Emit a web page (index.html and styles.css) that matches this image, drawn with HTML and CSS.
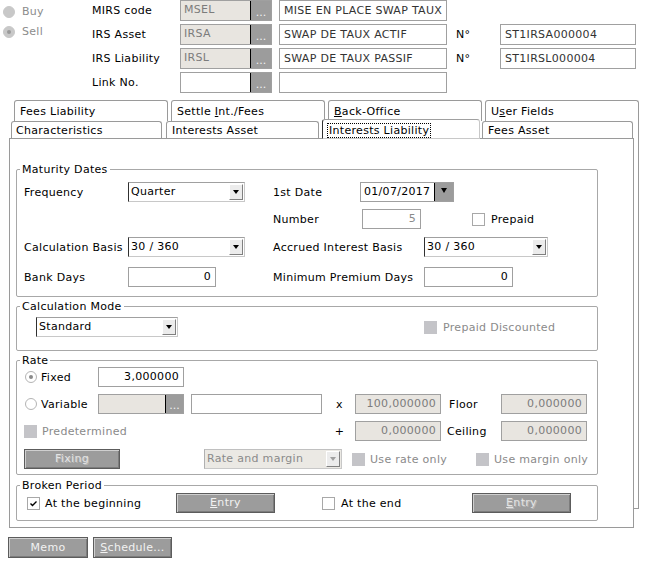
FILE: index.html
```html
<!DOCTYPE html>
<html lang="fr">
<head>
<meta charset="utf-8">
<title>IRS</title>
<link rel="stylesheet" href="styles.css">
</head>
<body>
<div class="top">
  <div class="side">
    <div class="rb"><span class="radio dis"></span><span class="dim">Buy</span></div>
    <div class="rb"><span class="radio dis on"></span><span class="dim">Sell</span></div>
  </div>
  <div class="topgrid">
    <span>MIRS code</span>
    <div class="pick"><span class="pv dis">MSEL</span><span class="dots">...</span></div>
    <div class="tf">MISE EN PLACE SWAP TAUX</div>
    <span></span><span></span>
    <span>IRS Asset</span>
    <div class="pick"><span class="pv dis">IRSA</span><span class="dots">...</span></div>
    <div class="tf">SWAP DE TAUX ACTIF</div>
    <span>N°</span>
    <div class="tf wide">ST1IRSA000004</div>
    <span>IRS Liability</span>
    <div class="pick"><span class="pv dis">IRSL</span><span class="dots">...</span></div>
    <div class="tf">SWAP DE TAUX PASSIF</div>
    <span>N°</span>
    <div class="tf wide">ST1IRSL000004</div>
    <span>Link No.</span>
    <div class="pick"><span class="pv"></span><span class="dots">...</span></div>
    <div class="tf"></div>
    <span></span><span></span>
  </div>
</div>

<div class="tabwrap">
  <div class="tabs back">
    <div class="tab">Fees Liability</div>
    <div class="tab">Settle <u>I</u>nt./Fees</div>
    <div class="tab"><u>B</u>ack-Office</div>
    <div class="tab">U<u>s</u>er Fields</div>
  </div>
  <div class="tabs front">
    <div class="tab">Characteristics</div>
    <div class="tab">Interests Asset</div>
    <div class="tab sel"><span class="focus">Interests Liability</span></div>
    <div class="tab">Fees Asset</div>
  </div>
  <div class="panel">
    <section class="grp gmat">
      <div class="gt">Maturity Dates</div>
      <div class="row r1">
        <span class="lab lw">Frequency</span>
        <div class="sel sw"><span class="sv">Quarter</span><span class="arr"></span></div>
        <span class="lab dl">1st Date</span>
        <div class="date"><span class="sv">01/07/2017</span><span class="darr"></span></div>
      </div>
      <div class="row r2">
        <span class="lab nl">Number</span>
        <div class="fld num nf gray">5</div>
        <span class="cb pp"></span><span class="cbl">Prepaid</span>
      </div>
      <div class="row r3">
        <span class="lab lw">Calculation Basis</span>
        <div class="sel sw"><span class="sv">30 / 360</span><span class="arr"></span></div>
        <span class="lab rl2">Accrued Interest Basis</span>
        <div class="sel aw"><span class="sv">30 / 360</span><span class="arr"></span></div>
      </div>
      <div class="row r4">
        <span class="lab lw">Bank Days</span>
        <div class="fld num bw">0</div>
        <span class="lab rl3">Minimum Premium Days</span>
        <div class="fld num mw">0</div>
      </div>
    </section>

    <section class="grp gcalc">
      <div class="gt">Calculation Mode</div>
      <div class="row rc">
        <div class="sel stw"><span class="sv">Standard</span><span class="arr"></span></div>
        <span class="cb dis pdc"></span><span class="cbl gray">Prepaid Discounted</span>
      </div>
    </section>

    <section class="grp grate">
      <div class="gt">Rate</div>
      <div class="rgrid">
        <div class="opt"><span class="radio on"></span>Fixed</div>
        <div class="fld num">3,000000</div>
        <span></span><span></span><span></span><span></span><span></span><span></span>

        <div class="opt"><span class="radio"></span>Variable</div>
        <div class="pick small"><span class="pv dis"></span><span class="dots">...</span></div>
        <span></span>
        <div class="fld"></div>
        <span class="op">x</span>
        <div class="fld num dis">100,000000</div>
        <span class="rlab">Floor</span>
        <div class="fld num dis">0,000000</div>

        <div class="opt span4 gray"><span class="cb dis"></span>Predetermined</div>
        <span class="op">+</span>
        <div class="fld num dis">0,000000</div>
        <span class="rlab ceil">Ceiling</span>
        <div class="fld num dis">0,000000</div>
      </div>
      <div class="row r5">
        <div class="btn off fix">Fixing</div>
        <div class="sel dsel"><span class="sv">Rate and margin</span><span class="arr"></span></div>
        <div class="chk uro"><span class="cb dis"></span><span class="gray">Use rate only</span></div>
        <div class="chk"><span class="cb dis"></span><span class="gray">Use margin only</span></div>
      </div>
    </section>

    <section class="grp gbp">
      <div class="gt">Broken Period</div>
      <div class="row rb1">
        <div class="chk bp1"><span class="cb on"><svg width="11" height="11" viewBox="0 0 11 11"><polyline points="2.5,5.5 4.5,7.5 8.5,3.5" fill="none" stroke="#000" stroke-width="1.4"/></svg></span><span>At the beginning</span></div>
        <div class="btn ent"><span><u>E</u>ntry</span></div>
        <div class="chk bp2"><span class="cb"></span><span>At the end</span></div>
        <div class="btn off ent"><span><u>E</u>ntry</span></div>
      </div>
    </section>
  </div>
</div>

<div class="foot">
  <div class="btn memo">Memo</div>
  <div class="btn sched"><span><u>S</u>chedule...</span></div>
</div>
</body>
</html>
```

FILE: styles.css
```css
* { box-sizing: border-box; }
body {
  margin: 0;
  width: 645px;
  height: 561px;
  overflow: hidden;
  background: #fff;
  color: #000;
  font-family: "DejaVu Sans", Verdana, sans-serif;
  font-size: 11px;
  line-height: 13px;
  letter-spacing: 0.3px;
}
u { text-decoration: underline; text-underline-offset: 1px; }

/* ---------- top area ---------- */
.top { display: flex; height: 93px; }
.side { width: 92px; padding: 6px 0 0 3px; display: flex; flex-direction: column; gap: 9px; }
.rb { display: flex; align-items: center; gap: 7px; height: 11px; }
.dim { color: #8c8c8c; }
.gray { color: #8a8a8a; }

.radio {
  flex: none;
  width: 12px; height: 12px;
  border-radius: 50%;
  border: 1px solid #b4b4b4;
  background: #fff;
  display: flex; align-items: center; justify-content: center;
}
.radio.dis { background: #c8c8c8; border-color: #c8c8c8; }
.radio.on::after { content: ""; width: 4px; height: 4px; border-radius: 50%; background: #8a8a8a; }
.radio.dis.on::after { background: #9a9a9a; }

.topgrid {
  display: grid;
  grid-template-columns: 88px 99px 177px 44px 136px;
  grid-template-rows: repeat(4, 21px);
  row-gap: 3px;
  align-items: center;
}
.pick {
  width: 92px; height: 21px;
  border: 1px solid #a0a0a0;
  display: flex;
  background: #fff;
}
.pick.small { width: 86px; height: 20px; }
.pv { flex: 1; padding-left: 3px; line-height: 18px; color: #7c7c7c; }
.pv.dis { background: #e8e5e0; }
.dots {
  width: 21px; flex: none;
  border-left: 1px solid #000;
  background: #9c9c9c;
  color: #f2f2f2;
  text-align: center;
  line-height: 23px;
  letter-spacing: 0;
  overflow: hidden;
}
.pick.small .dots { width: 18px; line-height: 21px; }
.tf {
  width: 168px; height: 21px;
  border: 1px solid #a0a0a0;
  padding-left: 4px;
  line-height: 19px;
  color: #333;
  white-space: nowrap;
  overflow: hidden;
}
.tf.wide { width: 136px; }

/* ---------- tabs ---------- */
.tabwrap {
  margin: 7px 0 0 9px;
  width: 630px;
  background:
    linear-gradient(#9a9a9a, #9a9a9a) right 0 top 19px / 1px 389px no-repeat,
    linear-gradient(#9a9a9a, #9a9a9a) right 0 top 408px / 5px 1px no-repeat;
}
.tabs { display: flex; }
.tab {
  border: 1px solid #9a9a9a;
  border-bottom: none;
  border-radius: 3px 3px 0 0;
  background: #fff;
  white-space: nowrap;
}
.back { height: 21px; padding-left: 5px; gap: 3px; }
.back .tab { width: 154px; height: 21px; padding: 2px 0 0 5px; line-height: 18px; }
.front { height: 19px; margin-top: -2px; padding-left: 2px; align-items: flex-end; }
.front .tab { height: 17px; padding: 1px 0 0 5px; line-height: 15px; }
.front .tab:nth-child(1) { width: 151px; padding-left: 4px; }
.front .tab:nth-child(2) { width: 153px; margin-left: 4px; }
.front .tab:nth-child(3) { width: 158px; margin-left: 3px; }
.front .tab:nth-child(4) { width: 151px; margin-left: 2px; }
.front .tab.sel {
  height: 20px;
  margin-bottom: -1px;
  position: relative;
  z-index: 1;
  padding: 3px 0 0 4px;
}
.focus { display: inline-block; border: 1px dotted #000; padding: 0 1px; line-height: 13px; }

.panel {
  width: 625px; height: 390px;
  border: 1px solid #9a9a9a;
  background: #fff;
  padding: 30px 0 0 6px;
}

/* ---------- group boxes ---------- */
.grp {
  width: 582px;
  border: 1px solid #a8a8a8;
  border-radius: 2px;
  padding: 0 0 0 7px;
}
.gt {
  width: fit-content;
  margin: -7px 0 0 -4px;
  padding: 0 2px;
  background: #fff;
  line-height: 13px;
  white-space: nowrap;
}
.gmat { padding-bottom: 9px; }
.gcalc { margin-top: 9px; padding-bottom: 13px; }
.grate { margin-top: 9px; padding-bottom: 5px; }
.gbp { margin-top: 10px; padding-bottom: 7px; }

.row { display: flex; align-items: center; height: 20px; }
.r1 { margin-top: 6px; }
.r2 { margin-top: 7px; }
.r3 { margin-top: 8px; }
.r4 { margin-top: 10px; }
.rc { margin-top: 4px; }
.r5 { margin-top: 8px; }
.rb1 { margin-top: 1px; }

.lab { flex: none; white-space: nowrap; }
.lw { width: 104px; }
.dl { width: 87px; margin-left: 28px; }
.nl { width: 89px; margin-left: 249px; }
.rl2 { width: 151px; margin-left: 28px; }
.rl3 { width: 151px; margin-left: 57px; }

/* fields */
.fld {
  flex: none;
  height: 20px;
  border: 1px solid #a0a0a0;
  background: #fff;
  padding: 0 4px;
  line-height: 18px;
  white-space: nowrap;
  overflow: hidden;
}
.fld.num { text-align: right; padding-right: 4px; }
.fld.dis { background: #e8e5e0; color: #7c7c7c; }
.nf { width: 59px; }
.bw { width: 88px; }
.mw { width: 89px; }

/* selects */
.sel {
  flex: none;
  height: 20px;
  display: flex;
  border: 1px solid;
  border-color: #a0a0a0 #c8c8c8 #c8c8c8 #303030;
  background: #fff;
}
.sv { flex: 1; padding-left: 2px; line-height: 18px; white-space: nowrap; overflow: hidden; }
.arr {
  flex: none;
  width: 14px; height: 16px;
  margin: 1px 1px 0 0;
  background: #ececec;
  border: 1px solid;
  border-color: #fff #808080 #808080 #fff;
  display: flex; align-items: center; justify-content: center;
}
.arr::after {
  content: "";
  border-left: 3px solid transparent;
  border-right: 3px solid transparent;
  border-top: 4px solid #000;
}
.sw { width: 117px; }
.aw { width: 124px; }
.stw { width: 142px; margin-left: 12px; }
.dsel { width: 138px; margin-left: 84px; background: #ebe9e4; border-color: #c0c0c0 #c8c8c8 #c8c8c8 #b0b0b0; }
.dsel .sv { color: #8a8a8a; }
.dsel .arr::after { border-top-color: #a0a0a0; }

.date {
  flex: none;
  width: 94px; height: 20px;
  display: flex;
  border: 1px solid #a0a0a0;
  background: #fff;
}
.date .sv { padding-left: 3px; }
.darr {
  flex: none;
  width: 19px;
  background: #9c9c9c;
  border-left: 1px solid #000;
  display: flex; align-items: center; justify-content: center;
}
.darr::after {
  content: "";
  border-left: 3px solid transparent;
  border-right: 3px solid transparent;
  border-top: 5px solid #000;
  margin-top: -3px;
}

/* checkboxes */
.cb {
  flex: none;
  width: 13px; height: 13px;
  border: 1px solid #a8a8a8;
  background: #fff;
  display: flex; align-items: center; justify-content: center;
}
.cb.dis { background: #c4c4c8; border-color: #c4c4c8; }
.cb svg { display: block; }
.cbl { margin-left: 6px; white-space: nowrap; }
.pp { margin-left: 51px; }
.pdc { margin-left: 246px; }
.chk { display: flex; align-items: center; gap: 5px; white-space: nowrap; flex: none; }

/* rate */
.rgrid {
  display: grid;
  grid-template-columns: 74px 86px 7px 131px 33px 86px 60px 86px;
  grid-template-rows: repeat(3, 20px);
  row-gap: 7px;
  align-items: center;
}
.rgrid .fld { width: auto; }
.opt { display: flex; align-items: center; gap: 4px; white-space: nowrap; }
.opt .radio { margin-left: 1px; }
.opt .cb { margin-right: 1px; }
.span4 { grid-column: span 4; }
.op { text-align: center; padding-left: 2px; }
.rlab { padding-left: 8px; }
.rlab.ceil { padding-left: 6px; }
.uro { width: 124px; margin-left: 10px; }

/* buttons */
.btn {
  flex: none;
  height: 20px;
  border: 1px solid #5c5c5c;
  background: #9c9c9c;
  box-shadow: inset 1px 1px 0 #cfcfcf, inset -1px -1px 0 #7c7c7c;
  color: #f2f2f2;
  text-align: center;
  line-height: 18px;
  white-space: nowrap;
}
.btn.off { color: #e4e4e4; text-shadow: 1px 1px 0 #b8b8b8; }
.fix { width: 96px; }
.ent { width: 99px; }
.bp1 { width: 152px; }
.bp1 .cb { margin-left: 3px; }
.bp2 { width: 150px; margin-left: 47px; gap: 6px; }

.foot { display: flex; gap: 5px; margin: 9px 0 0 8px; }
.memo { width: 80px; height: 21px; line-height: 19px; }
.sched { width: 79px; height: 21px; line-height: 19px; }
```
